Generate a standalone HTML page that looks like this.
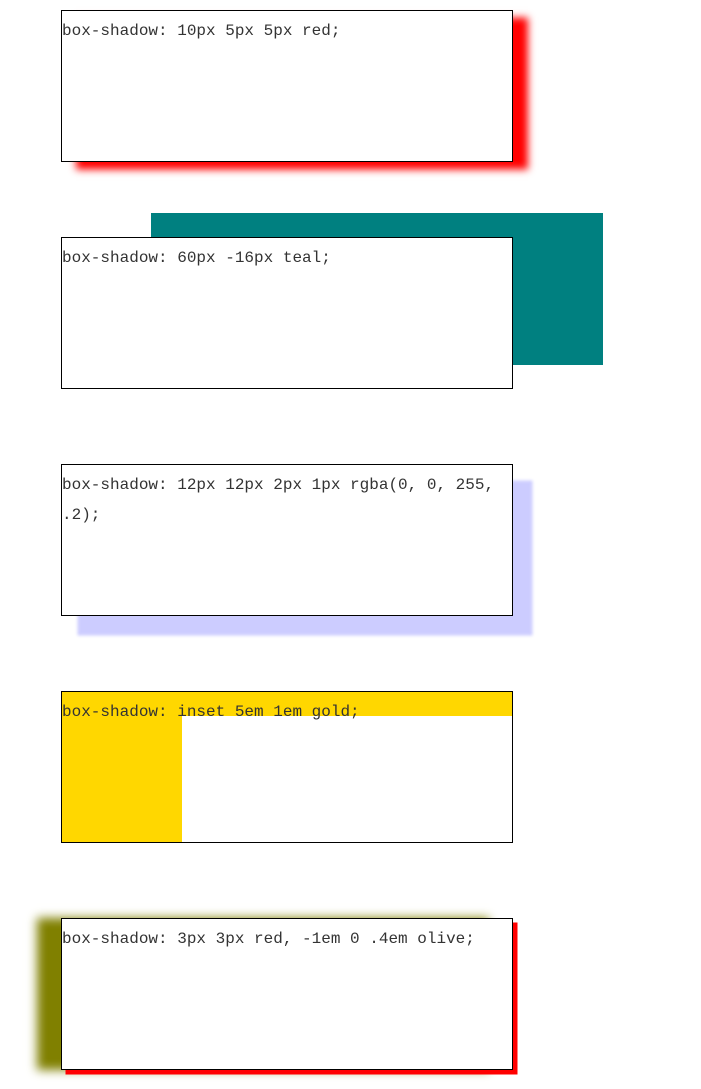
<!DOCTYPE html>
<html><head><meta charset="utf-8"><style>
html,body{margin:0;padding:0;background:#fff;width:701px;height:1089px;overflow:hidden}
.b{position:absolute;left:61px;width:450px;border:1px solid #000;background:#fff;
font-family:"Liberation Mono","Noto Sans CJK SC",monospace;font-size:16px;line-height:30px;color:#333;padding-top:5px;box-sizing:content-box;height:145px}
</style></head><body>
<div class="b" style="top:10px;box-shadow:15px 7.5px 7.5px red">box-shadow: 10px 5px 5px red;</div>
<div class="b" style="top:237px;box-shadow:90px -24px teal">box-shadow: 60px -16px teal;</div>
<div class="b" style="top:464px;box-shadow:18px 18px 3px 1.5px rgba(0,0,255,.2)">box-shadow: 12px 12px 2px 1px rgba(0, 0, 255, .2);</div>
<div class="b" style="top:691px;box-shadow:inset 120px 24px gold">box-shadow: inset 5em 1em gold;</div>
<div class="b" style="top:918px;box-shadow:4.5px 4.5px red,-24px 0 9.6px olive">box-shadow: 3px 3px red, -1em 0 .4em olive;</div>
</body></html>
